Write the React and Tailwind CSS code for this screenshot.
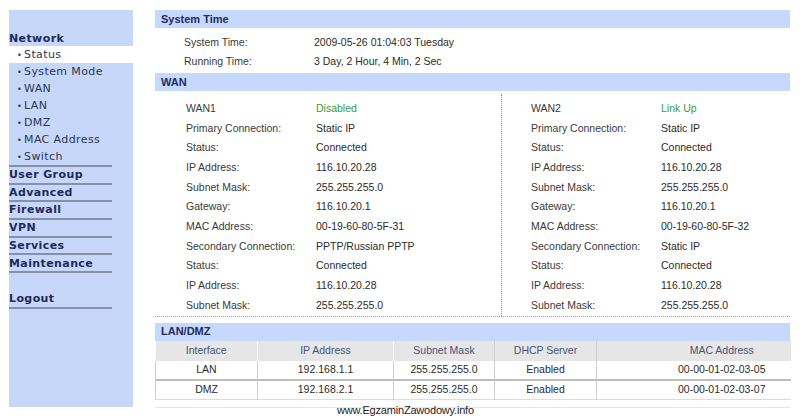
import React from "react";

const SUB = ["Status", "System Mode", "WAN", "LAN", "DMZ", "MAC Address", "Switch"];
const GROUPS = ["User Group", "Advanced", "Firewall", "VPN", "Services", "Maintenance"];

const WAN1 = [
  ["WAN1", "Disabled", true],
  ["Primary Connection:", "Static IP"],
  ["Status:", "Connected"],
  ["IP Address:", "116.10.20.28"],
  ["Subnet Mask:", "255.255.255.0"],
  ["Gateway:", "116.10.20.1"],
  ["MAC Address:", "00-19-60-80-5F-31"],
  ["Secondary Connection:", "PPTP/Russian PPTP"],
  ["Status:", "Connected"],
  ["IP Address:", "116.10.20.28"],
  ["Subnet Mask:", "255.255.255.0"],
];
const WAN2 = [
  ["WAN2", "Link Up", true],
  ["Primary Connection:", "Static IP"],
  ["Status:", "Connected"],
  ["IP Address:", "116.10.20.28"],
  ["Subnet Mask:", "255.255.255.0"],
  ["Gateway:", "116.10.20.1"],
  ["MAC Address:", "00-19-60-80-5F-32"],
  ["Secondary Connection:", "Static IP"],
  ["Status:", "Connected"],
  ["IP Address:", "116.10.20.28"],
  ["Subnet Mask:", "255.255.255.0"],
];

const side = { fontFamily: '"DejaVu Sans", Verdana, sans-serif' };
const body = { fontFamily: '"Liberation Sans", Arial, sans-serif' };

function Header({ children }) {
  return (
    <div className="h-[18px] bg-[#c6d8fc] pl-[6px] flex items-center text-[11px] font-bold text-[#1e2b5e]">
      {children}
    </div>
  );
}

function Line() {
  return <div className="h-[2px] w-[103px] bg-[#8590ab]" />;
}

function WanCol({ rows, className }) {
  return (
    <div className={className}>
      {rows.map(([l, v, g], i) => (
        <div key={i} className="h-[19.7px] flex items-center">
          <div className="w-[130px] text-[#3a3a3a]">{l}</div>
          <div className={g ? "text-[#3d9a35]" : "text-[#2b2b2b]"}>{v}</div>
        </div>
      ))}
    </div>
  );
}

export default function App() {
  return (
    <div className="relative w-[800px] h-[417px] bg-white overflow-hidden flex" style={body}>
      {/* Sidebar */}
      <div className="ml-[9px] mt-[10px] w-[124px] h-[397px] bg-[#c6d7fa] flex flex-col" style={side}>
        <div className="h-[36px] pt-[22px] leading-[14px] text-[11px] font-bold tracking-[0.4px] text-[#1e2a5a]">
          Network
        </div>
        {SUB.map((s, i) => (
          <div
            key={s}
            className={
              "h-[17px] pt-[2px] flex items-center pl-[8px] text-[11px] tracking-[0.4px] text-[#2b3652] " +
              (i === 0 ? "bg-white" : "")
            }
          >
            <span className="w-[7px] text-[8px] leading-none">•</span>
            <span>{s}</span>
          </div>
        ))}
        <Line />
        {GROUPS.map((g) => (
          <div key={g}>
            <div className="h-[15.7px] pt-[1px] flex items-center text-[11px] font-bold tracking-[0.4px] text-[#1e2a5a]">
              {g}
            </div>
            <Line />
          </div>
        ))}
        <div className="h-[17.7px]" />
        <div className="h-[15.7px] pt-[1px] flex items-center text-[11px] font-bold tracking-[0.4px] text-[#1e2a5a]">
          Logout
        </div>
        <Line />
      </div>

      {/* Main */}
      <div className="ml-[22px] mt-[10px] w-[635px] flex flex-col text-[10.5px]">
        <Header>System Time</Header>
        <div className="pt-[5px] pb-[1px] pl-[29px]">
          <div className="h-[19.5px] flex items-center">
            <div className="w-[130px] text-[#3a3a3a]">System Time:</div>
            <div className="text-[#2b2b2b]">2009-05-26 01:04:03 Tuesday</div>
          </div>
          <div className="h-[19.5px] flex items-center">
            <div className="w-[130px] text-[#3a3a3a]">Running Time:</div>
            <div className="text-[#2b2b2b]">3 Day, 2 Hour, 4 Min, 2 Sec</div>
          </div>
        </div>
        <Header>WAN</Header>
        <div className="mt-[3px] flex border-b border-dotted border-[#9a9a9a]">
          <WanCol rows={WAN1} className="w-[347px] pt-[5px] pl-[31px] border-r border-dotted border-[#9a9a9a]" />
          <WanCol rows={WAN2} className="flex-1 pt-[5px] pl-[29px]" />
        </div>
        <div className="mt-[6px]">
          <Header>LAN/DMZ</Header>
        </div>
        <table className="w-[635px] border-collapse table-fixed">
          <colgroup>
            <col className="w-[102px]" />
            <col className="w-[136px]" />
            <col className="w-[101px]" />
            <col className="w-[102px]" />
            <col className="w-[194px]" />
          </colgroup>
          <thead>
            <tr className="h-[20px] bg-[#e6e6e6] text-[#47527c]">
              <th className="font-normal text-center p-0 pt-[1px] border-r border-[#fafafa]">Interface</th>
              <th className="font-normal text-center p-0 pt-[1px] border-r border-[#fafafa]">IP Address</th>
              <th className="font-normal text-center p-0 pt-[1px] border-r border-[#d0d0d0]">Subnet Mask</th>
              <th className="font-normal text-center p-0 pt-[1px] border-r border-[#d0d0d0]">DHCP Server</th>
              <th className="font-normal text-center p-0 pt-[1px] pl-[56px]">MAC Address</th>
            </tr>
          </thead>
          <tbody className="text-[#2b2b2b]">
            <tr className="h-[19.5px] border-b-2 border-[#bdbdbd]">
              <td className="text-center p-0 pt-[1px] border-l border-r border-[#d0d0d0]">LAN</td>
              <td className="text-center p-0 pt-[1px] border-r border-[#d0d0d0]">192.168.1.1</td>
              <td className="text-center p-0 pt-[1px] border-r border-[#d0d0d0]">255.255.255.0</td>
              <td className="text-center p-0 pt-[1px] border-r border-[#d0d0d0]">Enabled</td>
              <td className="text-center p-0 pt-[1px] pl-[56px]">00-00-01-02-03-05</td>
            </tr>
            <tr className="h-[19.5px] border-b border-[#dcdcdc]">
              <td className="text-center p-0 border-l border-r border-[#d0d0d0]">DMZ</td>
              <td className="text-center p-0 border-r border-[#d0d0d0]">192.168.2.1</td>
              <td className="text-center p-0 border-r border-[#d0d0d0]">255.255.255.0</td>
              <td className="text-center p-0 border-r border-[#d0d0d0]">Enabled</td>
              <td className="text-center p-0 pl-[56px]">00-00-01-02-03-07</td>
            </tr>
          </tbody>
        </table>
        <div className="mt-[7px] h-px bg-[#dfe7f5]" />
      </div>

      <div className="absolute left-[337px] top-[403px] text-[11px] leading-[14px] tracking-[-0.2px] text-[#222]" style={body}>
        www.EgzaminZawodowy.info
      </div>
    </div>
  );
}
